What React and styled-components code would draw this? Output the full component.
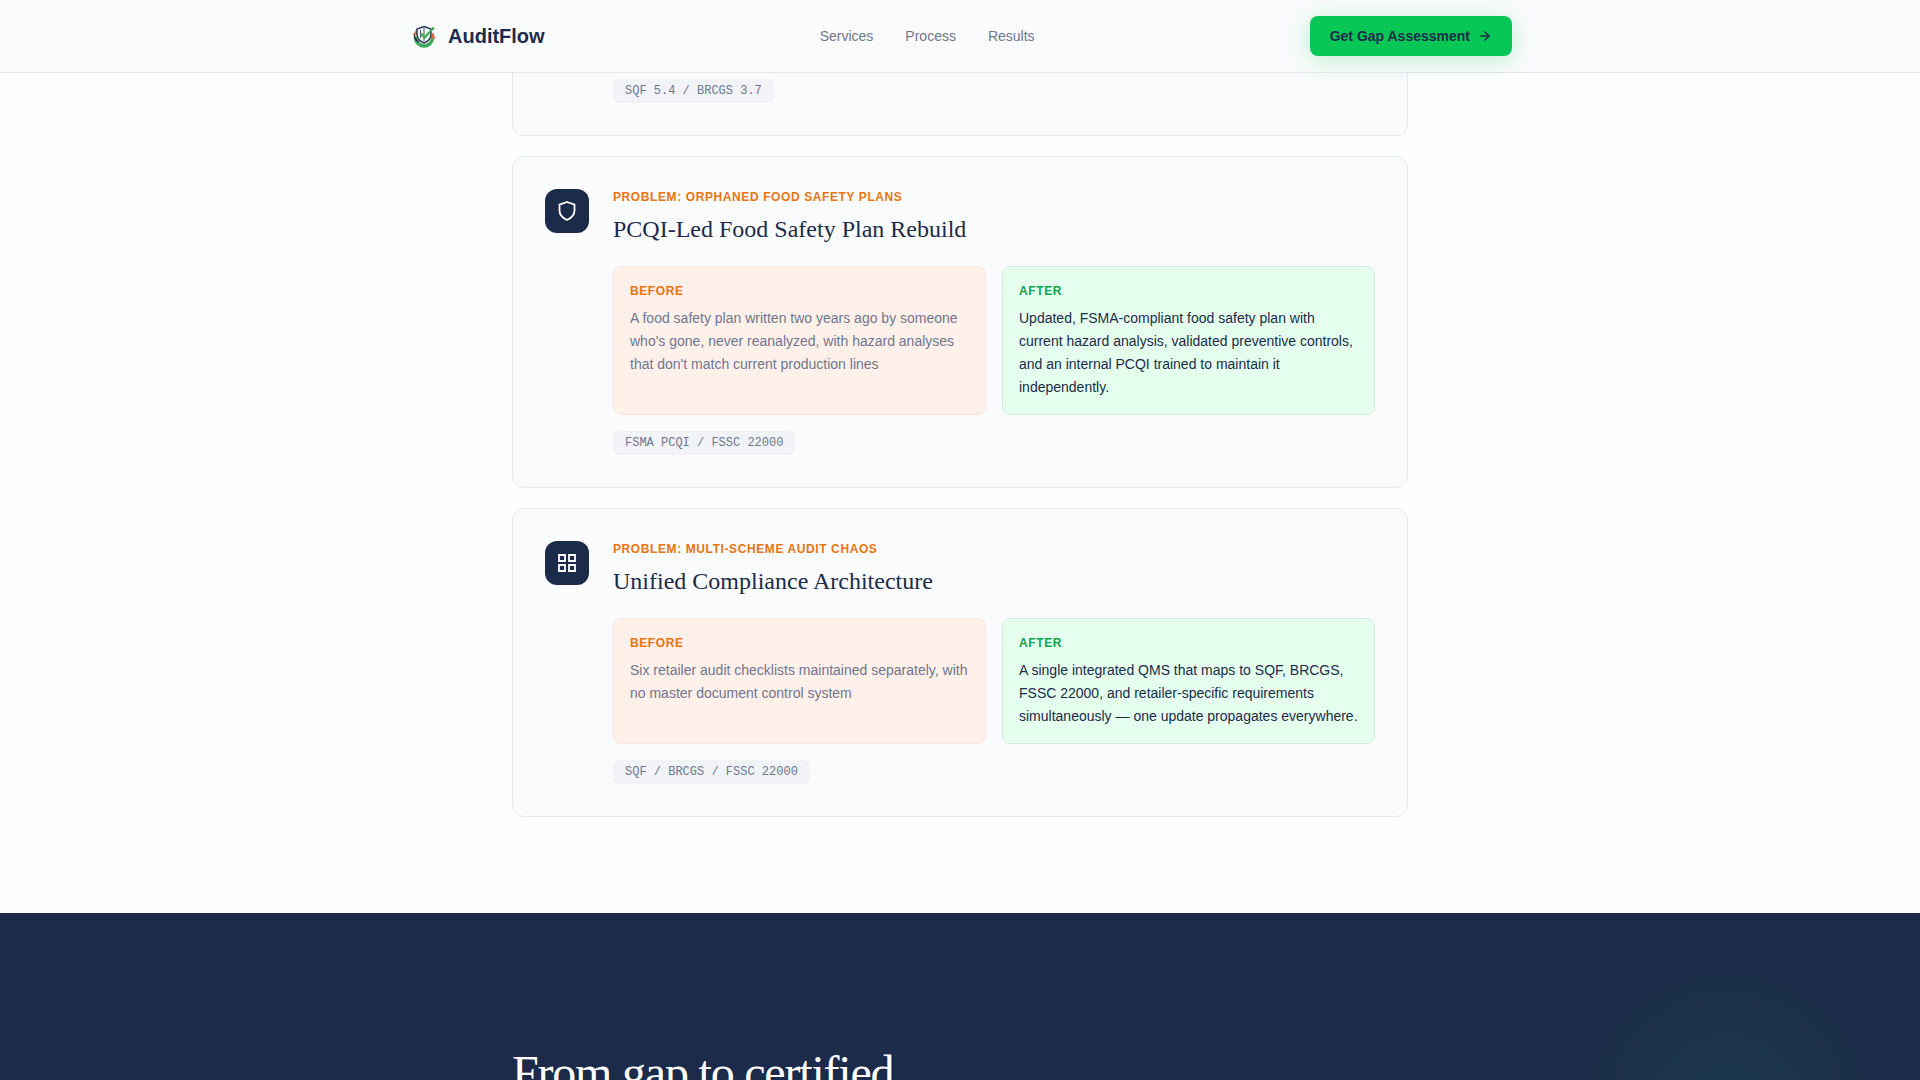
import React from 'react'
import styled, { createGlobalStyle } from 'styled-components';
import { ArrowRight } from 'lucide-react';

const GlobalStyle = createGlobalStyle`
  * {
    box-sizing: border-box;
    margin: 0;
    padding: 0;
  }
  body {
    background: #fefefe;
    color: #1c2b4a;
    font-family: "Liberation Sans", Arial, sans-serif;
  }
`;

const links = ["Services", "Process", "Results"];

const services = [
  {
    icon: "shield",
    problem: "Problem: Orphaned food safety plans",
    title: "PCQI-Led Food Safety Plan Rebuild",
    before: "A food safety plan written two years ago by someone who's gone, never reanalyzed, with hazard analyses that don't match current production lines",
    after: "Updated, FSMA-compliant food safety plan with current hazard analysis, validated preventive controls, and an internal PCQI trained to maintain it independently.",
    tag: "FSMA PCQI / FSSC 22000",
  },
  {
    icon: "grid",
    problem: "Problem: Multi-scheme audit chaos",
    title: "Unified Compliance Architecture",
    before: "Six retailer audit checklists maintained separately, with no master document control system",
    after: "A single integrated QMS that maps to SQF, BRCGS, FSSC 22000, and retailer-specific requirements simultaneously — one update propagates everywhere.",
    tag: "SQF / BRCGS / FSSC 22000",
  },
];

const Logo = () => (
  <svg width="32" height="32" viewBox="0 0 32 32" fill="none" aria-hidden="true">
    <path d="M7.5 17 A8.500 8.500 0 0 0 24.500 18" stroke="#3fa857" strokeWidth="3.500" />
    <path d="M6.500 13 A9 9 0 0 0 11 22" stroke="#22343f" strokeWidth="1.500" />
    <path d="M5 15 L8.500 9 L10 15 Z" fill="#d9694a" />
    <path d="M25 12 L27.500 19 L22 18 Z" fill="#d9694a" />
    <path d="M16 6.500 L23 9 V14 C23 18.500 20 21.500 16 23 C12 21.500 9 18.500 9 14 V9 Z" fill="#f2f6f5" stroke="#2b3b57" strokeWidth="1.500" />
    <path d="M16 8 V21 M12.500 10 V18" stroke="#4b5a70" />
    <path d="M13 13.500 L16.500 17.500 L26 7.500" stroke="#3fa857" strokeWidth="2.200" />
  </svg>
)

const ServiceIcon = ({ name }) => (
  <svg width="20" height="20" viewBox="0 0 20 20" fill="none" stroke="#fff" strokeWidth="1.800" strokeLinejoin="round" aria-hidden="true">
    {name === "shield" ? (
      <path d="M10 1 L17.500 3.700 V9.500 C17.500 14 14.500 17 10 19 C5.500 17 2.500 14 2.500 9.500 V3.700 Z" />
    ) : (
      <path strokeLinejoin="miter" d="M2 2 H8 V8 H2 Z M12 2 H18 V8 H12 Z M2 12 H8 V18 H2 Z M12 12 H18 V18 H12 Z" />
    )}
  </svg>
)

const App = () => {
  return (
    <Page>
      <GlobalStyle />
      <Header>
        <Bar>
          <Brand href="#top">
            <Logo />
            AuditFlow
          </Brand>
          <Nav>
            {links.map((link) => (
              <a key={link} href={`#${link.toLowerCase()}`}>{link}</a>
            ))}
          </Nav>
          <Cta type="button">
            Get Gap Assessment
            <ArrowRight size={14} strokeWidth={2.5} />
          </Cta>
        </Bar>
      </Header>

      <Services id="services">
        <CardTail>
          <Tag>SQF 5.4 / BRCGS 3.7</Tag>
        </CardTail>
        {services.map((service) => (
          <Card key={service.title}>
            <IconBox>
              <ServiceIcon name={service.icon} />
            </IconBox>
            <div className="content">
              <Label $color="#e87511">{service.problem}</Label>
              <h3>{service.title}</h3>
              <Compare>
                <Panel $bg="#fff1e9" $border="#fde5d9" $text="#6f7690">
                  <Label $color="#e87511">Before</Label>
                  <p>{service.before}</p>
                </Panel>
                <Panel $bg="#e5ffee" $border="#d3eadd" $text="#1c2b4a">
                  <Label $color="#12a150">After</Label>
                  <p>{service.after}</p>
                </Panel>
              </Compare>
              <Tag>{service.tag}</Tag>
            </div>
          </Card>
        ))}
      </Services>

      <Process id="process">
        <h2>From gap to certified</h2>
      </Process>
    </Page>
  )
}
export default App;

const Page = styled.div`
  display: flex;
  flex-direction: column;
  height: 100vh;
  overflow: hidden;
`;

const Header = styled.header`
  position: relative;
  z-index: 1;
  flex: none;
  padding: 16px 0;
  background: #fafbfc;
  border-bottom: 1px solid #e6e8eb;
`;

const Bar = styled.div`
  display: flex;
  align-items: center;
  justify-content: space-between;
  max-width: 1200px;
  margin: 0 auto;
  padding: 0 48px;
`;

const Brand = styled.a`
  display: flex;
  align-items: center;
  gap: 8px;
  color: #1c2b4a;
  font-size: 20px;
  font-weight: 700;
  text-decoration: none;
`;

const Nav = styled.nav`
  display: flex;
  gap: 32px;
  a {
    color: #6f7690;
    font-size: 14px;
    text-decoration: none;
  }
`;

const Cta = styled.button`
  display: flex;
  align-items: center;
  gap: 8px;
  height: 40px;
  padding: 0 20px;
  border: none;
  border-radius: 8px;
  background: #06c755;
  box-shadow: 0 4px 24px rgba(6, 199, 85, 0.25);
  color: #1c2b4a;
  font-family: inherit;
  font-size: 14px;
  font-weight: 600;
`;

const Services = styled.main`
  display: flex;
  flex-direction: column;
  gap: 20px;
  flex: none;
  width: 100%;
  max-width: 896px;
  margin: 0 auto;
  padding-bottom: 96px;
`;

const Card = styled.article`
  display: flex;
  align-items: flex-start;
  gap: 24px;
  padding: 32px;
  background: #fafbfc;
  border: 1px solid #e6e9ec;
  border-radius: 12px;
  .content {
    flex: 1;
  }
  h3 {
    margin: 8px 0 20px;
    font-family: "Liberation Serif", "Times New Roman", serif;
    font-size: 24px;
    font-weight: 400;
    line-height: 33px;
  }
`;

/* lower end of the card that has scrolled under the header */
const CardTail = styled(Card)`
  padding: 6px 32px 32px 100px;
  border-top: none;
  border-radius: 0 0 12px 12px;
`;

const IconBox = styled.div`
  display: flex;
  align-items: center;
  justify-content: center;
  width: 44px;
  height: 44px;
  background: #1c2b4a;
  border-radius: 12px;
`;

const Label = styled.div`
  color: ${(props) => props.$color};
  font-size: 12px;
  font-weight: 700;
  letter-spacing: 0.05em;
  line-height: 16px;
  text-transform: uppercase;
`;

const Compare = styled.div`
  display: grid;
  grid-template-columns: 1fr 1fr;
  gap: 16px;
  margin-bottom: 16px;
`;

const Panel = styled.div`
  padding: 16px 16px 15px;
  background: ${(props) => props.$bg};
  border: 1px solid ${(props) => props.$border};
  border-radius: 8px;
  p {
    margin-top: 8px;
    color: ${(props) => props.$text};
    font-size: 14px;
    line-height: 23px;
  }
`;

const Tag = styled.div`
  width: fit-content;
  padding: 4px 12px;
  background: #f1f3f6;
  border-radius: 6px;
  color: #6f7690;
  font-family: "Liberation Mono", "Courier New", monospace;
  font-size: 12px;
  line-height: 16px;
`;

const Process = styled.section`
  flex: 1;
  min-height: 0;
  padding-top: 128px;
  background: radial-gradient(circle at 90% 200px, rgba(6, 199, 85, 0.08), transparent 190px), #1c2b4a;
  h2 {
    max-width: 896px;
    margin: 0 auto;
    color: #fff;
    font-family: "Liberation Serif", "Times New Roman", serif;
    font-size: 48px;
    font-weight: 400;
    letter-spacing: -0.025em;
    line-height: 64px;
  }
`;
